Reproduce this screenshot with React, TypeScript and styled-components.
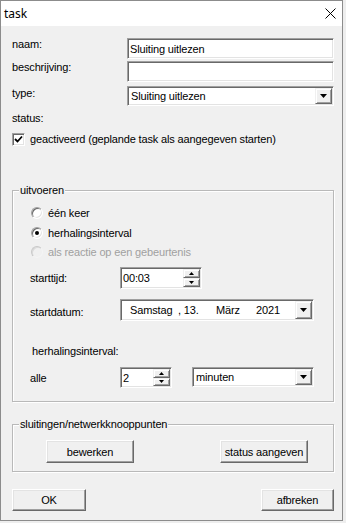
import styled, { createGlobalStyle } from 'styled-components';

// ============================================================================
// Global
// ============================================================================

const GlobalStyle = createGlobalStyle`
  html, body {
    margin: 0;
    padding: 0;
    background: #eeeeee;
  }
  body {
    font-family: "Liberation Sans", Arial, sans-serif;
    font-size: 11px;
    letter-spacing: -0.15px;
    color: #000;
  }
`;

// ============================================================================
// Window chrome
// ============================================================================

const Window = styled.div`
  width: 341px;
  height: 519px;
  border: 1px solid #8c8c8c;
  background: #f0f0f0;
  display: flex;
  flex-direction: column;
`;

const TitleBar = styled.div`
  height: 25px;
  background: #fff;
  display: flex;
  align-items: center;
  justify-content: space-between;
  padding-left: 3px;
`;

const Title = styled.span`
  font-family: "Noto Sans", "Liberation Sans", sans-serif;
  font-size: 12px;
  letter-spacing: 0;
`;

const CloseButton = styled.div`
  width: 24px;
  height: 25px;
  display: flex;
  align-items: center;
  justify-content: center;
`;

const Body = styled.div`
  flex: 1;
  display: flex;
  flex-direction: column;
  padding: 12px 8px 0 11px;
`;

// ============================================================================
// Form parts
// ============================================================================

const Row = styled.div<{ $top?: number; $label?: number; $h?: number }>`
  display: grid;
  grid-template-columns: ${(p) => p.$label ?? 115}px auto 1fr;
  align-items: start;
  margin-top: ${(p) => p.$top ?? 0}px;
  min-height: ${(p) => p.$h ?? 13}px;
`;

const Label = styled.span<{ $dy?: number; $dx?: number }>`
  line-height: 13px;
  padding-top: ${(p) => p.$dy ?? 0}px;
  padding-left: ${(p) => p.$dx ?? 0}px;
  white-space: nowrap;
`;

const Sunken = styled.div<{ $w?: number; $h?: number }>`
  box-sizing: border-box;
  width: ${(p) => (p.$w ? `${p.$w}px` : '100%')};
  height: ${(p) => p.$h ?? 21}px;
  background: #fff;
  border: 1px solid;
  border-color: #a0a0a0 #fff #fff #a0a0a0;
  box-shadow: inset 1px 1px #696969, inset -1px -1px #e3e3e3;
  display: flex;
  align-items: stretch;
`;

const FieldText = styled.span<{ $pad?: number }>`
  flex: 1;
  display: flex;
  align-items: center;
  padding-left: ${(p) => p.$pad ?? 2}px;
  white-space: nowrap;
`;

const ArrowBtn = styled.div<{ $w?: number }>`
  box-sizing: border-box;
  width: ${(p) => p.$w ?? 17}px;
  margin: 1px 1px 1px 0;
  background: #f0f0f0;
  border: 1px solid;
  border-color: #f0f0f0 #696969 #696969 #f0f0f0;
  box-shadow: inset 1px 1px #fff, inset -1px -1px #a0a0a0;
  display: flex;
  align-items: center;
  justify-content: center;
`;

const SpinCol = styled.div`
  display: flex;
  flex-direction: column;
  margin: 1px 1px 1px 0;
`;

const SpinBtn = styled(ArrowBtn)`
  flex: 1;
  margin: 0;
`;

const Status = styled.div`
  margin-top: 6px;
  line-height: 13px;
`;

const CheckRow = styled.label`
  display: flex;
  align-items: center;
  gap: 5px;
  margin-top: 8px;
  line-height: 13px;
  height: 13px;
`;

const CheckBox = styled.span`
  box-sizing: border-box;
  width: 13px;
  height: 13px;
  background: #fff;
  border: 1px solid;
  border-color: #a0a0a0 #fff #fff #a0a0a0;
  box-shadow: inset 1px 1px #696969, inset -1px -1px #e3e3e3;
  display: flex;
  align-items: center;
  justify-content: center;
`;

const Group = styled.fieldset<{ $top: number }>`
  margin: ${(p) => p.$top}px 0 0 0;
  padding: 0;
  border: 1px solid #b9b9b9;
  box-shadow: inset 1px 1px #fff, 1px 1px #fff;
  min-width: 0;
  width: 322px;
  box-sizing: border-box;
`;

const Legend = styled.legend`
  padding: 0 1px;
  margin-left: 6px;
  line-height: 13px;
  background: #f0f0f0;
`;

const GroupBody = styled.div<{ $pad: string }>`
  padding: ${(p) => p.$pad};
`;

const RadioRow = styled.div<{ $top: number; $disabled?: boolean }>`
  display: flex;
  align-items: center;
  gap: 5px;
  height: 16px;
  margin-top: ${(p) => p.$top}px;
  margin-left: 1px;
  color: ${(p) => (p.$disabled ? '#a0a0a0' : '#000')};
`;

const Radio = styled.span<{ $disabled?: boolean }>`
  box-sizing: border-box;
  width: 12px;
  height: 12px;
  border-radius: 50%;
  border: 1px solid;
  border-color: ${(p) =>
    p.$disabled ? '#c8c8c8 #f4f4f4 #f4f4f4 #c8c8c8' : '#a0a0a0 #fff #fff #a0a0a0'};
  background: ${(p) => (p.$disabled ? '#f0f0f0' : '#fff')};
  box-shadow: ${(p) =>
    p.$disabled ? 'inset 1px 1px #dadada' : 'inset 1px 1px #696969, inset -1px -1px #e3e3e3'};
  display: flex;
  align-items: center;
  justify-content: center;
`;

const Dot = styled.span`
  width: 4px;
  height: 4px;
  border-radius: 50%;
  background: #000;
`;

const DatePart = styled.span<{ $w?: number }>`
  width: ${(p) => (p.$w ? `${p.$w}px` : 'auto')};
  display: flex;
  align-items: center;
`;

const ComboCell = styled.div`
  padding-left: 20px;
`;

const ButtonRow = styled.div<{ $top?: number }>`
  display: flex;
  justify-content: space-between;
  margin-top: ${(p) => p.$top ?? 0}px;
`;

const Button = styled.button<{ $w: number; $h?: number }>`
  box-sizing: border-box;
  width: ${(p) => p.$w}px;
  height: ${(p) => p.$h ?? 23}px;
  padding: 0;
  font: inherit;
  letter-spacing: inherit;
  color: #000;
  background: #f0f0f0;
  border: 1px solid;
  border-color: #fff #696969 #696969 #fff;
  box-shadow: inset -1px -1px #a0a0a0, inset 1px 1px #e3e3e3;
  border-radius: 0;
`;

// ============================================================================
// Icons
// ============================================================================

const Down = ({ w = 7 }: { w?: number }) => (
  <svg width={w} height={(w + 1) / 2} viewBox={`0 0 ${w} ${(w + 1) / 2}`}>
    <polygon points={`0,0 ${w},0 ${w / 2},${(w + 1) / 2}`} fill="#000" />
  </svg>
);

const Up = () => (
  <svg width="5" height="3" viewBox="0 0 5 3">
    <polygon points="0,3 5,3 2.5,0" fill="#000" />
  </svg>
);

const Combo = ({ text, w, h = 20 }: { text: string; w?: number; h?: number }) => (
  <Sunken $w={w} $h={h}>
    <FieldText $pad={3}>{text}</FieldText>
    <ArrowBtn>
      <Down />
    </ArrowBtn>
  </Sunken>
);

const Spin = ({ text, w, h }: { text: string; w: number; h: number }) => (
  <Sunken $w={w} $h={h}>
    <FieldText $pad={2}>{text}</FieldText>
    <SpinCol>
      <SpinBtn>
        <Up />
      </SpinBtn>
      <SpinBtn>
        <Down w={5} />
      </SpinBtn>
    </SpinCol>
  </Sunken>
);

// ============================================================================
// Component
// ============================================================================

export default function App() {
  return (
    <>
      <GlobalStyle />
      <Window>
        <TitleBar>
          <Title>task</Title>
          <CloseButton>
            <svg width="11" height="11" viewBox="0 0 11 11">
              <path d="M0.5 0.5 L10.5 10.5 M10.5 0.5 L0.5 10.5" stroke="#000" strokeWidth="1" />
            </svg>
          </CloseButton>
        </TitleBar>

        <Body>
          <Row $h={21}>
            <Label>naam:</Label>
            <Sunken $w={207}>
              <FieldText $pad={2}>Sluiting uitlezen</FieldText>
            </Sunken>
          </Row>
          <Row $top={2} $h={21}>
            <Label>beschrijving:</Label>
            <Sunken $w={207} />
          </Row>
          <Row $top={4} $h={20}>
            <Label $dy={1}>type:</Label>
            <Combo text="Sluiting uitlezen" w={207} />
          </Row>

          <Status>status:</Status>

          <CheckRow>
            <CheckBox>
              <svg width="9" height="9" viewBox="0 0 9 9">
                <path d="M1 4 L3.5 6.5 L8 1.5" stroke="#000" strokeWidth="1.8" fill="none" />
              </svg>
            </CheckBox>
            geactiveerd (geplande task als aangegeven starten)
          </CheckRow>

          <Group $top={38}>
            <Legend>uitvoeren</Legend>
            <GroupBody $pad="0 0 13px 17px">
              <RadioRow $top={8}>
                <Radio />
                één keer
              </RadioRow>
              <RadioRow $top={4}>
                <Radio>
                  <Dot />
                </Radio>
                herhalingsinterval
              </RadioRow>
              <RadioRow $top={3} $disabled>
                <Radio $disabled />
                als reactie op een gebeurtenis
              </RadioRow>

              <Row $top={7} $label={90} $h={22}>
                <Label $dy={5}>starttijd:</Label>
                <Spin text="00:03" w={82} h={22} />
              </Row>
              <Row $top={10} $label={90} $h={22}>
                <Label $dy={7}>startdatum:</Label>
                <Sunken $w={194} $h={22}>
                  <FieldText $pad={9}>
                    <DatePart $w={48}>Samstag</DatePart>
                    <DatePart $w={38}>, 13.</DatePart>
                    <DatePart $w={40}>März</DatePart>
                    <DatePart>2021</DatePart>
                  </FieldText>
                  <ArrowBtn>
                    <Down />
                  </ArrowBtn>
                </Sunken>
              </Row>

              <Row $top={24} $label={90}>
                <Label $dx={2}>herhalingsinterval:</Label>
              </Row>
              <Row $top={9} $label={90} $h={21}>
                <Label $dy={5}>alle</Label>
                <Spin text="2" w={52} h={21} />
                <ComboCell>
                  <Combo text="minuten" w={122} />
                </ComboCell>
              </Row>
            </GroupBody>
          </Group>

          <Group $top={16}>
            <Legend>sluitingen/netwerkknooppunten</Legend>
            <GroupBody $pad="9px 25px 8px 33px">
              <ButtonRow>
                <Button $w={88}>bewerken</Button>
                <Button $w={88}>status aangeven</Button>
              </ButtonRow>
            </GroupBody>
          </Group>

          <ButtonRow $top={17}>
            <Button $w={74} $h={22}>
              OK
            </Button>
            <Button $w={73} $h={22}>
              afbreken
            </Button>
          </ButtonRow>
        </Body>
      </Window>
    </>
  );
}
